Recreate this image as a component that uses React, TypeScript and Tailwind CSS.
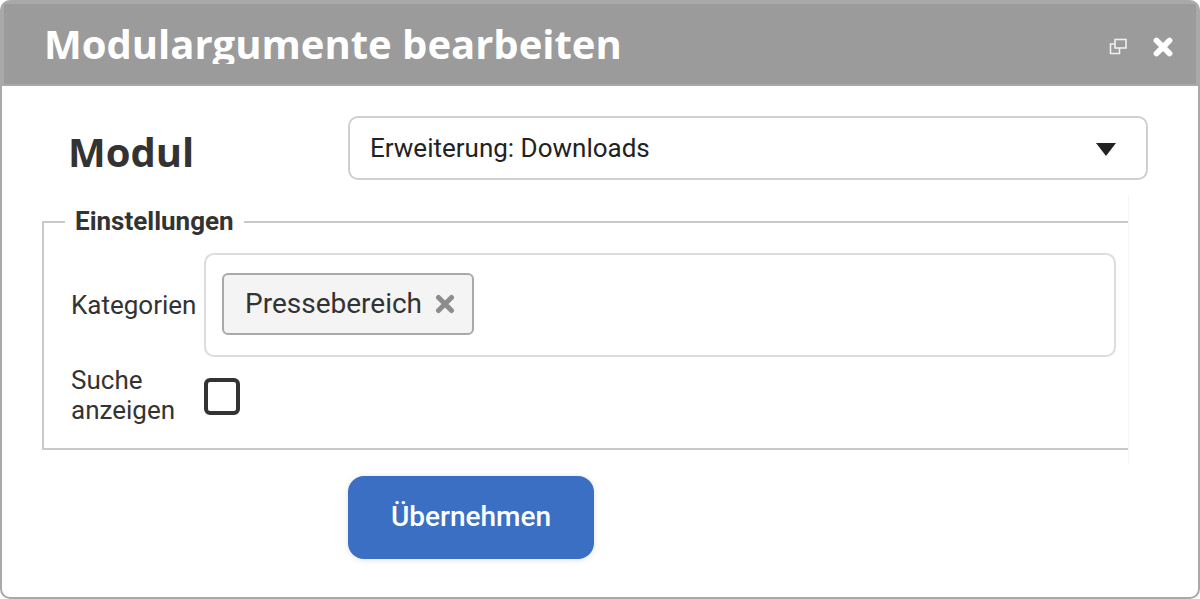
export default function App() {
  return (
    <div className="h-[599px] w-[1200px] overflow-hidden rounded-[10px] border-2 border-[#a9a9a9] bg-white font-['Roboto',sans-serif] text-[#333]">
      <header className="flex h-[84px] items-start justify-between border-2 border-[#a9a9a9] bg-[#9b9b9b] pl-[40px] pr-[23px]">
        <div className="mt-[14px] h-[46px] overflow-hidden">
          <h1 className="font-['Open_Sans',sans-serif] text-[40px] font-bold leading-[52px] text-white">
            Modulargumente bearbeiten
          </h1>
        </div>
        <div className="mt-[33px] flex items-center gap-[25px] text-white">
          <svg width="20" height="18" viewBox="0 0 20 18" fill="none" stroke="currentColor" strokeWidth="1.6" opacity="0.85">
            <rect x="7" y="1.5" width="11" height="8.5" />
            <path d="M7 6H2.5V15.5H11.5V10" />
          </svg>
          <svg width="20" height="20" viewBox="0 0 20 20" stroke="currentColor" strokeWidth="5.8" strokeLinecap="round">
            <path d="M3.5 3.5L16.5 16.5M16.5 3.5L3.5 16.5" />
          </svg>
        </div>
      </header>

      <main className="pl-[40px]">
        <div className="mt-[30px] flex items-center">
          <h2 className="relative top-[4px] ml-[26px] w-[280px] font-['Open_Sans',sans-serif] text-[40px] font-bold leading-[52px] text-[#333]">
            Modul
          </h2>
          <div className="flex h-[64px] w-[800px] items-center justify-between rounded-[10px] border-2 border-[#d0d0d0] pl-[20px] pr-[30px] text-[26px] text-[#222]">
            <span>Erweiterung: Downloads</span>
            <span className="mt-[2px] h-0 w-0 border-x-[10.5px] border-t-[13px] border-x-transparent border-t-[#222]" />
          </div>
        </div>

        <div className="mt-[15px] h-[270px] w-[1087px] border-r border-[#f6f6f6] pt-[1px]">
          <fieldset className="mt-[12px] h-[242px] border-y-2 border-l-2 border-[#c9c9c9] pl-[21px]">
            <legend className="px-[10px] text-[26px] font-bold leading-[27px] text-[#333]">Einstellungen</legend>
            <div className="mt-[18px] flex items-center">
              <label className="w-[139px] pl-[6px] text-[26px] leading-[30px]">Kategorien</label>
              <div className="flex h-[104px] w-[912px] items-start rounded-[10px] border-2 border-[#dcdcdc] pl-[16px] pt-[18px]">
                <span className="flex h-[62px] w-[252px] items-center rounded-[6px] border-2 border-[#a9a9a9] bg-[#f4f4f4] pl-[21px] text-[28px] text-[#333]">
                  Pressebereich
                  <svg className="ml-[13px]" width="20" height="20" viewBox="0 0 20 20" stroke="#8c8c8c" strokeWidth="5" strokeLinecap="round">
                    <path d="M3.5 3.5L16.5 16.5M16.5 3.5L3.5 16.5" />
                  </svg>
                </span>
              </div>
            </div>
            <div className="mt-[10px] flex items-center">
              <label className="-mt-[2px] w-[139px] pl-[6px] text-[26px] leading-[30px]">
                Suche
                <br />
                anzeigen
              </label>
              <span className="h-[37px] w-[36px] rounded-[6px] border-[4px] border-[#333]" />
            </div>
          </fieldset>
        </div>

        <button
          type="button"
          className="mt-[11px] ml-[306px] block h-[83px] w-[246px] rounded-[16px] bg-[#3b6fc4] pb-[2px] text-[28px] font-medium text-white shadow-[0_1px_6px_rgba(0,0,0,0.12)]"
        >
          Übernehmen
        </button>
      </main>
    </div>
  );
}
